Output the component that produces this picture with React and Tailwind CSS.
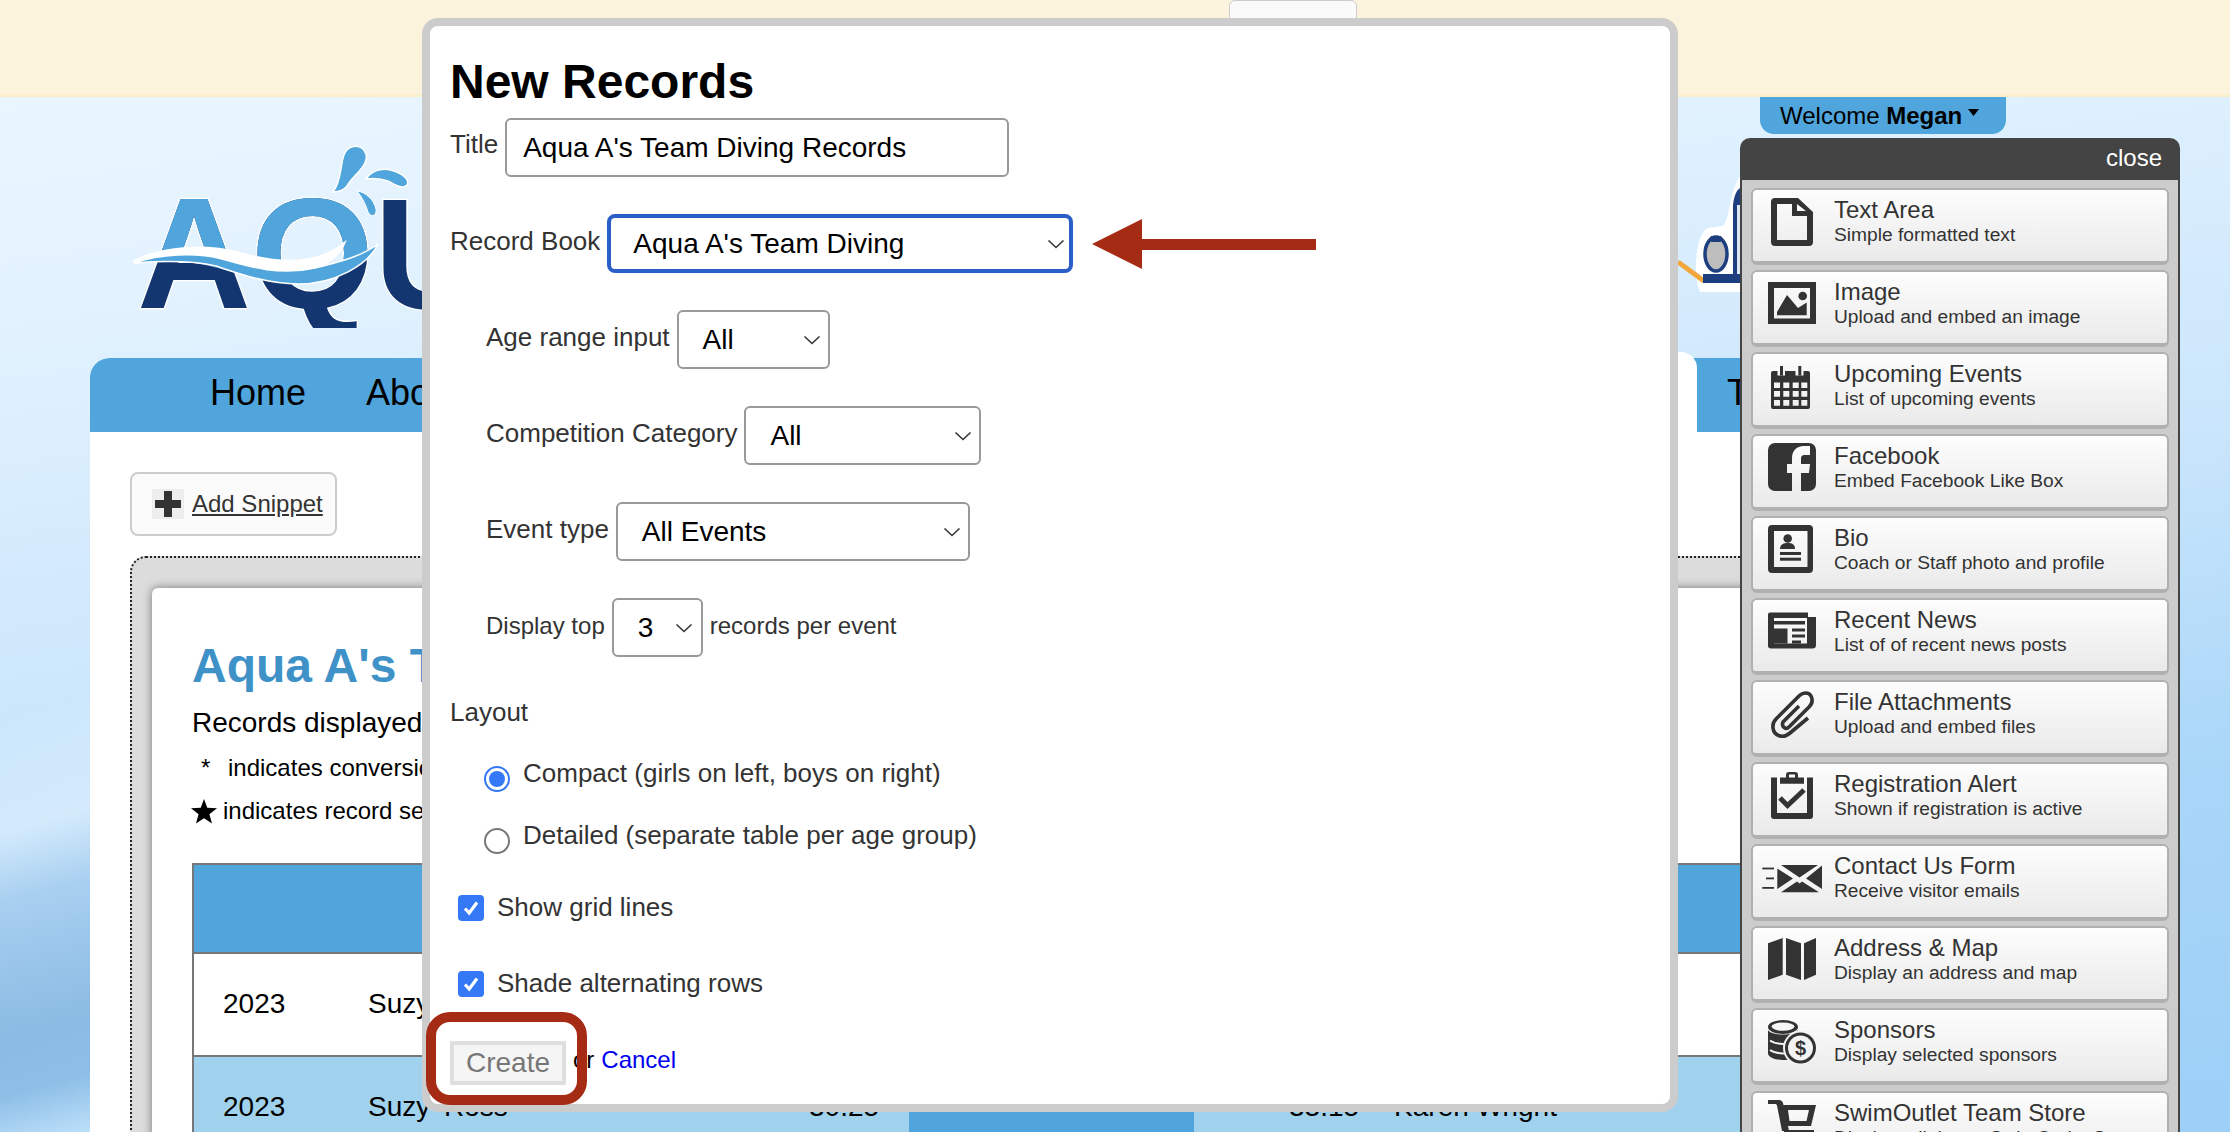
import React from "react";

const D = "#333";

const Chevron = () => (
  <svg width="18" height="10" viewBox="0 0 18 10" className="shrink-0">
    <path d="M1.5 1.5 L9 8.5 L16.5 1.5" fill="none" stroke="#333" strokeWidth="1.6" />
  </svg>
);

const Select = ({ w, text, focus, pad = "pr-[7px]" }) => (
  <div
    className={`${w} ${pad} h-[59px] shrink-0 flex items-center justify-between bg-white text-[28px] text-black ${
      focus ? "border-[4px] border-[#2b5fc7] rounded-[8px] pl-[22px]" : "border-2 border-[#999] rounded-[6px] pl-[24px]"
    }`}
  >
    <span className="mt-[1px]">{text}</span>
    <Chevron />
  </div>
);

const Check = () => (
  <div className="w-[26px] h-[26px] rounded-[4px] bg-[#3478f6] flex items-center justify-center shrink-0">
    <svg width="20" height="20" viewBox="0 0 20 20">
      <path d="M4 10.5 L8.2 15 L16 4.5" fill="none" stroke="#fff" strokeWidth="3.2" />
    </svg>
  </div>
);

const icons = {
  file: (
    <path fillRule="evenodd" d="M7 0 H30 L45 14 V44 a4 4 0 0 1-4 4 H7 a4 4 0 0 1-4-4 V4 a4 4 0 0 1 4-4Z M9 6 V42 H39 V18 H24 V6Z M29 6 V13 H38Z" />
  ),
  image: (
    <>
      <path fillRule="evenodd" d="M0 2 H48 V44 H0Z M6 8 V38.5 H42 V8Z" />
      <path d="M9 35.3 V32 L19 15 L30 28 L38.7 22.5 V35.3Z" />
      <circle cx="34.7" cy="16" r="4.3" />
    </>
  ),
  cal: (
    <>
      <path fillRule="evenodd" d="M5 9 H40 a2 2 0 0 1 2 2 V45 a2 2 0 0 1-2 2 H5 a2 2 0 0 1-2-2 V11 a2 2 0 0 1 2-2Z M6 20.6 v5.5 h6 v-5.5Z M15.3 20.6 v5.5 h6 v-5.5Z M24.7 20.6 v5.5 h6 v-5.5Z M33.3 20.6 v5.5 h6 v-5.5Z M6 29 v5.8 h6 v-5.8Z M15.3 29 v5.8 h6 v-5.8Z M24.7 29 v5.8 h6 v-5.8Z M33.3 29 v5.8 h6 v-5.8Z M6 38 v5.8 h6 v-5.8Z M15.3 38 v5.8 h6 v-5.8Z M24.7 38 v5.8 h6 v-5.8Z M33.3 38 v5.8 h6 v-5.8Z" />
      <rect x="9.5" y="8" width="7.5" height="5.5" fill="#f7f7f7" />
      <rect x="27.5" y="8" width="8" height="5.5" fill="#f7f7f7" />
      <rect x="12" y="4" width="3" height="9.5" />
      <rect x="30.3" y="4" width="3" height="9.5" />
    </>
  ),
  fb: (
    <path fillRule="evenodd" d="M7 -1 H41 a7 7 0 0 1 7 7 V40 a7 7 0 0 1-7 7 H7 a7 7 0 0 1-7-7 V6 a7 7 0 0 1 7-7Z M33 47 V29 H41 L42 20 H33 V15 C33 12 34 11 37 11 H42 V2 H36 C28 2 24 7 24 14 V20 H19 V29 H24 V47Z" />
  ),
  bio: (
    <>
      <path fillRule="evenodd" d="M4 -1 H41 a4 4 0 0 1 4 4 V43 a4 4 0 0 1-4 4 H4 a4 4 0 0 1-4-4 V3 a4 4 0 0 1 4-4Z M6 5 V41 H39.5 V5Z" />
      <circle cx="19.7" cy="12.5" r="4.3" />
      <path d="M12 23 C12 18 16 17 19.7 17 C24 17 27 18 27 23Z" />
      <rect x="12" y="26" width="21" height="3" />
      <rect x="12" y="31.7" width="21" height="3" />
    </>
  ),
  news: (
    <>
      <path fillRule="evenodd" d="M2 4.5 H40 V9 H48 V37 a3.5 3.5 0 0 1-3.5 3.5 H3 a3 3 0 0 1-3-3 V6.5 a2 2 0 0 1 2-2Z M6 10 V35.5 H39 V10Z" />
      <rect x="6" y="13" width="31" height="3.5" />
      <rect x="6" y="20.5" width="13.5" height="15" />
      <rect x="24" y="20.5" width="13" height="3" />
      <rect x="24" y="26.5" width="13" height="3" />
      <rect x="24" y="32.5" width="9" height="3" />
    </>
  ),
  clip: (
    <path
      d="M40 28 L22 43 C15 49 6 46 5 38 C4.5 34 6 31 8 29 L31 6 C35 2 41 2 43 6 C45 10 44 14 41 17 L21 37 C18 40 13 37 15 32 L31 16"
      fill="none"
      stroke="#333"
      strokeWidth="3.6"
    />
  ),
  clipboard: (
    <>
      <path d="M3 5.4 H9 V41 H39 V5.4 H45 V44 a3 3 0 0 1-3 3 H6 a3 3 0 0 1-3-3Z" />
      <path fillRule="evenodd" d="M12 5.4 H18 V3 a3 3 0 0 1 3-3 H27 a3 3 0 0 1 3 3 V5.4 H36 V11.7 H12Z M21 2.5 V5.4 H27 V2.5Z" />
      <path d="M12 26 L19.5 33.5 L36 18" fill="none" stroke="#333" strokeWidth="5" />
    </>
  ),
  mail: (
    <>
      <path d="M13 11 H50 L31.5 23.5Z" />
      <path d="M9.3 14.5 L25 24.5 L9.3 35Z" />
      <path d="M54 11.5 V35 L38 24.5Z" />
      <path d="M13 38.3 L29 27.5 L31.5 29.5 L34 27.5 L51 38.3Z" />
      <rect x="-5.7" y="13.6" width="11.7" height="1.8" />
      <rect x="-2" y="23.5" width="8" height="1.8" />
      <rect x="-5.7" y="33" width="11.7" height="1.8" />
    </>
  ),
  map: (
    <>
      <path d="M0 7.3 L14.7 2 V38.7 L0 44Z" />
      <path d="M18 2 L33 7.3 V44 L18 38.7Z" />
      <path d="M36 7.3 L48 2 V38.7 L36 44Z" />
    </>
  ),
  coins: (
    <>
      <ellipse cx="15" cy="9" rx="15" ry="7" />
      <ellipse cx="15" cy="8.6" rx="11.5" ry="4.2" fill="#f7f7f7" />
      <path d="M0 12 C3 18 27 18 30 12 V36 C27 44 3 44 0 36Z" />
      <path d="M2 22.5 C8 27 22 27 28 22.5 M2 32 C8 36.5 22 36.5 28 32" fill="none" stroke="#f4f4f4" strokeWidth="2" />
      <circle cx="32.5" cy="30" r="17.5" fill="#f3f3f3" />
      <circle cx="32.5" cy="30" r="15.5" />
      <circle cx="32.5" cy="30" r="12.5" fill="#f3f3f3" />
      <text x="32.5" y="37" textAnchor="middle" fontSize="20" fontWeight="700" fontFamily="Liberation Sans" fill="#333">$</text>
    </>
  ),
  cart: (
    <>
      <path d="M0 -1 H10 C14 -1 15 1 15.5 4 L21 30 H14 L9 4.5 C8.8 3.5 8 3 7 3 H0Z" />
      <path fillRule="evenodd" d="M15 4 H48 L43 25 H18Z M20 9 L21.5 20 H38.5 L41 9Z" />
      <rect x="16" y="29" width="30" height="5" />
    </>
  ),
};

const items = [
  ["file", "Text Area", "Simple formatted text"],
  ["image", "Image", "Upload and embed an image"],
  ["cal", "Upcoming Events", "List of upcoming events"],
  ["fb", "Facebook", "Embed Facebook Like Box"],
  ["bio", "Bio", "Coach or Staff photo and profile"],
  ["news", "Recent News", "List of of recent news posts"],
  ["clip", "File Attachments", "Upload and embed files"],
  ["clipboard", "Registration Alert", "Shown if registration is active"],
  ["mail", "Contact Us Form", "Receive visitor emails"],
  ["map", "Address & Map", "Display an address and map"],
  ["coins", "Sponsors", "Display selected sponsors"],
  ["cart", "SwimOutlet Team Store", "Display a link to a SwimOutlet Store"],
];

const Logo = () => (
  <svg width="300" height="210" viewBox="130 130 300 210" className="ml-[40px] mt-[33px] shrink-0">
    <defs>
      <clipPath id="lightpart">
        <path d="M130 130 H382 V245 C350 270 310 285 267 280 C230 275 200 255 137 262Z" />
      </clipPath>
      <clipPath id="logobottom">
        <path d="M130 130 H430 V310 H430 L430 328 H130Z" />
      </clipPath>
    </defs>
    <g clipPath="url(#logobottom)">
      <text x="137" y="308" fontFamily="Liberation Sans" fontWeight="700" fontSize="158" fill="#143670" stroke="#fff" strokeWidth="2.5" paintOrder="stroke">AQUA</text>
    </g>
    <text x="137" y="308" fontFamily="Liberation Sans" fontWeight="700" fontSize="158" fill="#4fa5dc" clipPath="url(#lightpart)">AQUA</text>
    <path d="M134 262 C165 247 205 245 240 254 C268 262 310 270 342 246 C335 262 300 278 268 274 C235 268 190 254 134 262Z" fill="#fff" stroke="#fff" strokeWidth="4" />
    <path d="M134 263 C160 254 195 252 222 259 C250 267 280 276 315 268 C340 262 362 256 378 244 C368 265 335 284 298 284 C268 284 240 274 216 266 C190 260 160 261 134 263Z" fill="#4fa5dc" stroke="#fff" strokeWidth="1.5" />
    <path d="M333 192 C342 180 340 165 344 155 C348 144 362 143 366 154 C369 166 352 176 347 186 C344 190 338 192 333 192Z" fill="#4fa5dc" stroke="#fff" strokeWidth="1.5" />
    <path d="M366 179 C372 170 384 167 394 171 C403 174 410 180 407 185 C402 190 394 184 388 181 C380 178 373 178 366 179Z" fill="#4fa5dc" stroke="#fff" strokeWidth="1.5" />
    <path d="M357 191 C366 192 374 200 376 209 C377 216 371 218 368 212 C366 205 362 197 357 191Z" fill="#4fa5dc" stroke="#fff" strokeWidth="1" />
  </svg>
);

const LogoRight = () => (
  <svg width="62" height="190" viewBox="1678 130 62 190" className="ml-[1248px] mt-[33px] shrink-0">
    <path d="M1700 292 C1692 275 1696 232 1708 228 L1722 226 C1730 224 1728 195 1740 176 V292Z" fill="#fff" />
    <path d="M1678 262 L1704 281" stroke="#f2a63c" strokeWidth="5" />
    <ellipse cx="1716" cy="254" rx="11" ry="17" fill="#bdbdbd" stroke="#1d3f80" strokeWidth="3.5" />
    <rect x="1710" y="236" width="12" height="6" rx="2" fill="#1d3f80" />
    <rect x="1703" y="274" width="37" height="9" fill="#1d3f80" />
    <path d="M1733 274 V205 C1734 195 1737 190 1740 188 V274Z" fill="#1d3f80" />
    <rect x="1737" y="205" width="3" height="69" fill="#dfe7f2" />
  </svg>
);

export default function App() {
  return (
    <div className="relative w-[2230px] h-[1132px] overflow-hidden font-['Liberation_Sans',sans-serif] text-black bg-no-repeat bg-size-[90px_1132px,100%_100%] bg-[linear-gradient(165deg,rgba(0,0,0,0)_62%,rgba(255,255,255,0.3)_72%,rgba(60,120,180,0.14)_78%,rgba(50,110,170,0.28)_90%,rgba(50,110,170,0.22)_95%,rgba(255,255,255,0.25)_100%),linear-gradient(172deg,#eef8ff_0%,#e0f1fe_25%,#cbe6fc_50%,#a9d6f8_75%,#9dcff7_100%)]">
      {/* top bar */}
      <div className="h-[97px] bg-[#fcf3dc] border-b-[3px] border-[#fbeecb]" />

      {/* page */}
      <div className="w-[2080px] ml-[90px]">
        <div className="h-[261px] flex items-start">
          <Logo />
          <LogoRight />
        </div>

        <nav className="h-[74px] flex items-center bg-[#50a5dc] rounded-tl-[20px] text-[36px]">
          <span className="ml-[120px] -mt-[5px]">Home</span>
          <span className="ml-[60px] -mt-[5px]">About</span>
          <div className="ml-[1040px] w-[197px] h-[80px] -mt-[6px] bg-white rounded-tr-[16px]" />
          <span className="ml-[30px] -mt-[5px]">Team</span>
        </nav>

        <main className="bg-white h-[700px] pt-[40px] pl-[40px]">
          <div className="w-[207px] h-[64px] flex items-center bg-[#fbfbfb] border-2 border-[#ccc] rounded-[8px] pl-[20px]">
            <div className="w-[32px] h-[30px] bg-[#eee] flex items-center justify-center">
              <svg width="28" height="28" viewBox="0 0 28 28">
                <path d="M10 1 H18 V10 H27 V18 H18 V27 H10 V18 H1 V10 H10Z" fill="#333" />
              </svg>
            </div>
            <span className="ml-[8px] text-[24px] leading-none text-[#333] underline">Add Snippet</span>
          </div>

          <div className="mt-[20px] h-[600px] w-[2000px] bg-[#dcdcdc] border-t-2 border-l-2 border-dotted border-[#222] rounded-tl-[16px] pt-[30px] pl-[20px]">
            <div className="h-[600px] bg-white rounded-tl-[6px] shadow-[0_0_10px_#777] pt-[50px] pl-[40px]">
              <h2 className="text-[48px] leading-[56px] font-bold text-[#3f92c8]">Aqua A's Team Diving Records</h2>
              <p className="mt-[12px] text-[28px] leading-[34px]">Records displayed for all age groups</p>
              <p className="mt-[13px] text-[24px] leading-[30px] flex">
                <span className="ml-[9px] w-[27px]">*</span>
                <span>indicates conversion</span>
              </p>
              <p className="mt-[13px] text-[24px] leading-[30px] flex items-center">
                <svg width="26" height="26" viewBox="0 0 24 24" className="-ml-[1px] mr-[6px]">
                  <path d="M12 1 L15 9 L24 9.4 L17 15 L19.4 23.5 L12 18.6 L4.6 23.5 L7 15 L0 9.4 L9 9Z" fill="#000" />
                </svg>
                <span>indicates record set</span>
              </p>

              <div className="mt-[37px] w-[1800px] border-t-2 border-l-2 border-[#777] text-[28px]">
                <div className="h-[87px] bg-[#50a5dc]" />
                <div className="h-[103px] border-t-2 border-[#777] flex items-center bg-white pb-[2px]">
                  <span className="w-[174px] pl-[29px]">2023</span>
                  <span className="[word-spacing:6px]">Suzy Ross</span>
                </div>
                <div className="h-[103px] border-t-2 border-[#777] flex items-stretch bg-[#a0d2ee]">
                  <span className="w-[174px] pl-[29px] self-center -mt-[2px]">2023</span>
                  <span className="w-[441px] self-center -mt-[2px] [word-spacing:6px]">Suzy Ross</span>
                  <span className="w-[100px] self-center -mt-[2px]">30.25</span>
                  <div className="w-[285px] bg-[#50a5dc]" />
                  <span className="ml-[95px] self-center -mt-[2px]">33.15</span>
                  <span className="ml-[35px] self-center -mt-[2px]">Karen Wright</span>
                </div>
              </div>
            </div>
          </div>
        </main>
      </div>

      {/* tab behind modal */}
      <div className="absolute left-[1229px] top-0 w-[128px] h-[20px] bg-[#fafafa] border border-[#ccc] rounded-t-[6px]" />

      {/* welcome tab */}
      <div className="absolute left-[1760px] top-[97px] w-[246px] h-[37px] bg-[#50a5dc] rounded-b-[14px] flex items-center pl-[20px] text-[24px]">
        <span>
          Welcome <b>Megan</b>
        </span>
        <svg width="12" height="7" viewBox="0 0 12 7" className="ml-[6px] -mt-[6px]">
          <path d="M0 0 H11 L5.5 7Z" fill="#000" />
        </svg>
      </div>

      {/* sidebar */}
      <aside className="absolute left-[1740px] top-[138px] w-[440px] h-[994px] overflow-hidden">
        <div className="h-[42px] bg-[#444] rounded-t-[10px] flex items-center justify-end pr-[18px] pb-[2px] text-[24px] text-white">close</div>
        <div className="h-[952px] bg-[#ccc] border-x-2 border-[#444] pt-[8px] pl-[9px]">
          {items.map(([ic, t, s]) => (
            <div
              key={t}
              className="w-[418px] h-[77px] mb-[5.05px] flex items-start pl-[15px] pt-[8px] border-2 border-b-4 border-[#b0b0b0] rounded-[6px] bg-[linear-gradient(#fdfdfd,#eaeaea)] text-[#333]"
            >
              <svg width="48" height="48" viewBox="0 0 48 48" className="shrink-0 overflow-visible" fill={D}>
                {icons[ic]}
              </svg>
              <div className="ml-[18px] -mt-[1px]">
                <div className="text-[24px] leading-[25px]">{t}</div>
                <div className="text-[19.2px] leading-[25px] whitespace-nowrap">{s}</div>
              </div>
            </div>
          ))}
        </div>
      </aside>

      {/* modal */}
      <section className="absolute left-[422px] top-[18px] w-[1256px] h-[1094px] bg-white border-[8px] border-[#ccc] rounded-[16px] pl-[20px] pt-[29px] text-[26px] text-[#333]">
        <h1 className="text-[48px] leading-[54px] font-bold text-black">New Records</h1>
        <div className="mt-[9px] h-[59px] flex items-center gap-[7px]">
          <span className="-mt-[7px]">Title</span>
          <div className="w-[504px] h-[59px] flex items-center border-2 border-[#999] rounded-[6px] pl-[16px] text-[28px] text-black">
            <span className="mt-[1px]">Aqua A's Team Diving Records</span>
          </div>
        </div>
        <div className="mt-[37px] h-[59px] flex items-center gap-[7px]">
          <span className="-mt-[5px]">Record Book</span>
          <Select w="w-[466px]" text="Aqua A's Team Diving" focus pad="pr-[4px]" />
        </div>
        <div className="mt-[37px] pl-[36px] h-[59px] flex items-center gap-[7px]">
          <span className="-mt-[5px]">Age range input</span>
          <Select w="w-[153px]" text="All" />
        </div>
        <div className="mt-[37px] pl-[36px] h-[59px] flex items-center gap-[7px]">
          <span className="-mt-[5px]">Competition Category</span>
          <Select w="w-[237px]" text="All" />
        </div>
        <div className="mt-[37px] pl-[36px] h-[59px] flex items-center gap-[7px]">
          <span className="-mt-[5px]">Event type</span>
          <Select w="w-[354px]" text="All Events" />
        </div>
        <div className="mt-[37px] pl-[36px] h-[59px] flex items-center gap-[7px] text-[24px]">
          <span className="-mt-[3px]">Display top</span>
          <Select w="w-[91px]" text="3" pad="pr-[8px]" />
          <span className="-mt-[3px]">records per event</span>
        </div>

        <div className="mt-[40px] leading-[30px]">Layout</div>

        <div className="mt-[31px] pl-[34px] flex items-start gap-[13px] leading-[30px]">
          <div className="mt-[8px] w-[26px] h-[26px] rounded-full border-2 border-[#3478f6] flex items-center justify-center">
            <div className="w-[16px] h-[16px] rounded-full bg-[#3478f6]" />
          </div>
          <span>Compact (girls on left, boys on right)</span>
        </div>
        <div className="mt-[28px] pl-[34px] flex items-start gap-[13px] leading-[30px]">
          <div className="mt-[8px] w-[26px] h-[26px] rounded-full border-2 border-[#777]" />
          <span>Detailed (separate table per age group)</span>
        </div>

        <div className="mt-[38px] pl-[8px] flex items-start gap-[13px] leading-[30px]">
          <div className="mt-[3px]"><Check /></div>
          <span>Show grid lines</span>
        </div>
        <div className="mt-[46px] pl-[8px] flex items-start gap-[13px] leading-[30px]">
          <div className="mt-[3px]"><Check /></div>
          <span>Shade alternating rows</span>
        </div>

        <div className="mt-[43px] flex items-center text-[24px]">
          <div className="w-[116px] h-[44px] flex items-center justify-center bg-[#f5f5f5] border-[4px] border-[#dedede] text-[28px] text-[#777]">Create</div>
          <span className="ml-[7px] -mt-[6px] text-black">or</span>
          <span className="ml-[7px] -mt-[6px] text-[#0000ee]">Cancel</span>
        </div>
      </section>

      {/* annotations */}
      <div className="absolute left-[426px] top-[1012px] w-[161px] h-[93px] border-[10px] border-[#a52b14] rounded-[24px]" />
      <svg width="224" height="50" viewBox="0 0 224 50" className="absolute left-[1092px] top-[219px]">
        <path d="M0 25 L50 0 V20 H224 V31 H50 V50Z" fill="#a52b14" />
      </svg>
    </div>
  );
}
